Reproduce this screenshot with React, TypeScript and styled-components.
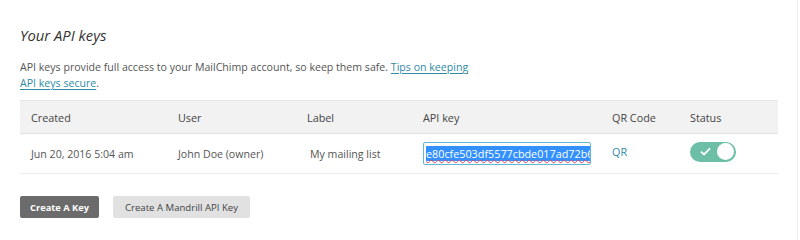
import React from 'react';
import styled, { createGlobalStyle } from 'styled-components';

const GlobalStyle = createGlobalStyle`
  html, body {
    margin: 0;
    padding: 0;
    background: #ffffff;
    font-family: "Open Sans", "Liberation Sans", sans-serif;
  }
`;

const Page = styled.div`
  width: 798px;
  height: 240px;
  box-sizing: border-box;
  border-right: 1px solid #ececec;
  padding: 24px 20px 0 20px;
`;

const Title = styled.h2`
  margin: 0;
  font-size: 14.8px;
  font-weight: 400;
  font-style: italic;
  color: #333333;
  line-height: 22px;
`;

const Intro = styled.p`
  margin: 13px 0 0;
  width: 452px;
  font-size: 10.6px;
  line-height: 16px;
  color: #555555;
`;

const Link = styled.a`
  color: #2f8aa6;
  text-decoration: underline;
  text-underline-offset: 2px;
`;

const Table = styled.div`
  margin-top: 9px;
  width: 758px;
  display: grid;
  grid-template-columns: 147px 129px 116px 189px 78px 1fr;
`;

const HeadCell = styled.div`
  height: 34px;
  box-sizing: border-box;
  padding-left: 11px;
  display: flex;
  align-items: center;
  background: #f2f2f2;
  border-top: 1px solid #e6e6e6;
  border-bottom: 1px solid #e3e3e3;
  font-size: 10.8px;
  color: #444444;
`;

const Cell = styled.div<{ $shift?: number }>`
  height: 40px;
  box-sizing: border-box;
  padding-left: ${p => 11 + (p.$shift || 0)}px;
  display: flex;
  align-items: center;
  border-bottom: 1px solid #ececec;
  font-size: 10.6px;
  color: #555555;
`;

const KeyBox = styled.div`
  width: 168px;
  height: 23px;
  box-sizing: border-box;
  border: 1px solid #5fbad6;
  border-radius: 2px;
  padding: 0 2px;
  display: flex;
  align-items: center;
  overflow: hidden;
  white-space: nowrap;
`;

const Selected = styled.span`
  background: #3390ff;
  color: #ffffff;
  font-size: 10.8px;
  line-height: 15px;
  text-decoration: underline wavy #e0475b;
  text-decoration-thickness: 1px;
`;

const QrLink = styled.a`
  color: #2f8aa6;
  text-decoration: none;
  font-size: 10.8px;
  margin-top: -4px;
`;

const Toggle = styled.div<{ $on: boolean }>`
  width: 46px;
  height: 20px;
  border-radius: 10px;
  background: ${p => (p.$on ? '#6cbfa6' : '#cccccc')};
  display: flex;
  align-items: center;
  justify-content: space-between;
  padding: 0 2px 0 10px;
  box-sizing: border-box;
  margin-top: -4px;
`;

const Knob = styled.span`
  width: 17px;
  height: 17px;
  border-radius: 50%;
  background: #ffffff;
`;

const Actions = styled.div`
  margin-top: 22px;
  display: flex;
  gap: 14px;
`;

const Button = styled.button<{ $primary?: boolean }>`
  height: 22px;
  padding: 0 ${p => (p.$primary ? 10 : 12)}px;
  border: none;
  border-radius: 2px;
  font-family: "Open Sans", "Liberation Sans", sans-serif;
  font-size: ${p => (p.$primary ? 9.3 : 9.6)}px;
  font-weight: ${p => (p.$primary ? 700 : 400)};
  background: ${p => (p.$primary ? '#6b6b6b' : '#e1e1e1')};
  color: ${p => (p.$primary ? '#ffffff' : '#444444')};
`;

const columns = ['Created', 'User', 'Label', 'API key', 'QR Code', 'Status'];

export default function App() {
  return (
    <>
      <GlobalStyle />
      <Page>
        <Title>Your API keys</Title>
        <Intro>
          API keys provide full access to your MailChimp account, so keep them safe.{' '}
          <Link href="#">Tips on keeping API keys secure</Link>.
        </Intro>
        <Table>
          {columns.map(c => (
            <HeadCell key={c}>{c}</HeadCell>
          ))}
          <Cell>Jun 20, 2016 5:04 am</Cell>
          <Cell>John Doe (owner)</Cell>
          <Cell $shift={3}>My mailing list</Cell>
          <Cell>
            <KeyBox>
              <Selected>e80cfe503df5577cbde017ad72b6c8f1-us13</Selected>
            </KeyBox>
          </Cell>
          <Cell>
            <QrLink href="#">QR</QrLink>
          </Cell>
          <Cell>
            <Toggle $on>
              <svg width="11" height="9" viewBox="0 0 11 9">
                <path d="M1 4.6 L4 7.4 L10 1.4" fill="none" stroke="#ffffff" strokeWidth="1.8" />
              </svg>
              <Knob />
            </Toggle>
          </Cell>
        </Table>
        <Actions>
          <Button $primary>Create A Key</Button>
          <Button>Create A Mandrill API Key</Button>
        </Actions>
      </Page>
    </>
  );
}
